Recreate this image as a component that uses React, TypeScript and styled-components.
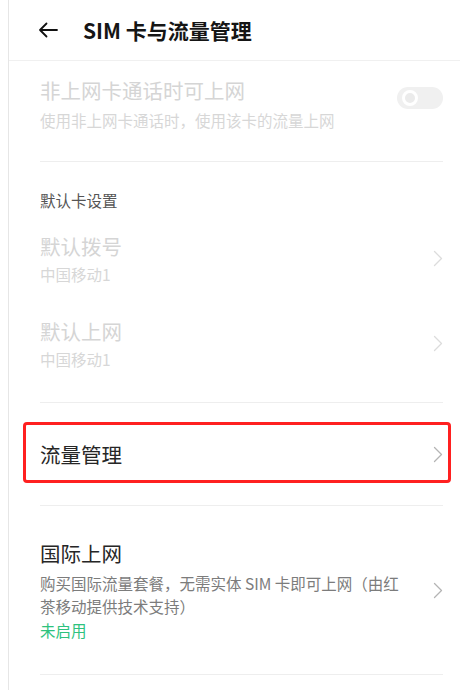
import React from "react";
import styled, { createGlobalStyle } from "styled-components";

const GlobalStyle = createGlobalStyle`
  html, body {
    margin: 0;
    padding: 0;
    background: #fff;
  }
  body {
    font-family: "Noto Sans CJK SC", "Noto Sans", sans-serif;
    -webkit-font-smoothing: antialiased;
  }
`;

const Page = styled.div`
  margin-left: 8px;
  border-left: 1px solid #e6e6e6;
  min-height: 690px;
  background: #fff;
  box-sizing: border-box;
`;

const Header = styled.header`
  display: flex;
  align-items: center;
  gap: 25px;
  height: 61px;
  padding-left: 29px;
  margin-right: 15px;
  border-bottom: 1px solid #f0f0f0;
  box-sizing: border-box;
`;

const BackButton = styled.button`
  display: flex;
  align-items: center;
  justify-content: center;
  width: 20px;
  height: 20px;
  padding: 0;
  border: none;
  background: none;
  color: #111;
`;

const Title = styled.h1`
  margin: 0;
  font-size: 21px;
  font-weight: 700;
  line-height: 28px;
  color: #151515;
`;

const List = styled.div`
  padding: 0 32px 0 31px;
`;

const Divider = styled.div<{ $top?: number; $bottom?: number }>`
  height: 1px;
  background: #eeeeee;
  margin-top: ${(p) => p.$top ?? 0}px;
  margin-bottom: ${(p) => p.$bottom ?? 0}px;
`;

const Row = styled.div<{ $pad: string; $align?: string }>`
  display: flex;
  align-items: ${(p) => p.$align ?? "center"};
  justify-content: space-between;
  gap: 16px;
  padding: ${(p) => p.$pad};
`;

const RowText = styled.div`
  display: flex;
  flex-direction: column;
  min-width: 0;
`;

const RowTitle = styled.div<{ $disabled?: boolean }>`
  font-size: 20.5px;
  line-height: 28px;
  color: ${(p) => (p.$disabled ? "#d5d5d5" : "#262626")};
`;

const RowSub = styled.div<{ $disabled?: boolean; $gap?: number }>`
  margin-top: ${(p) => p.$gap ?? 3}px;
  font-size: 15.5px;
  line-height: 22px;
  color: ${(p) => (p.$disabled ? "#d7d7d7" : "#7a7a7a")};
`;

const Description = styled.div`
  margin-top: 5px;
  max-width: 368px;
  font-size: 15.5px;
  line-height: 23px;
  color: #7c7c7c;
`;

const Status = styled.div`
  margin-top: 1px;
  font-size: 15.5px;
  line-height: 22px;
  color: #2ec27e;
`;

const SectionLabel = styled.div`
  padding-top: 27px;
  margin-bottom: 5px;
  font-size: 15.5px;
  line-height: 22px;
  color: #555;
`;

const Toggle = styled.div`
  flex-shrink: 0;
  display: flex;
  align-items: center;
  width: 46px;
  height: 22px;
  margin-top: 11px;
  padding: 0 5px;
  border-radius: 11px;
  background: #f0f0f0;
  box-sizing: border-box;
`;

const Knob = styled.div`
  width: 16px;
  height: 16px;
  border-radius: 50%;
  border: 3px solid #fff;
  background: #ebebeb;
  box-sizing: border-box;
`;

const Highlight = styled.div`
  margin: 19px -8px 22px -17px;
  padding: 3px 5px 0 14px;
  height: 61px;
  border: 3px solid #ff2020;
  border-radius: 4px;
  box-sizing: border-box;
  display: flex;
  align-items: center;
  justify-content: space-between;
`;

const ChevronWrap = styled.span<{ $disabled?: boolean }>`
  flex-shrink: 0;
  display: flex;
  color: ${(p) => (p.$disabled ? "#dcdcdc" : "#b4b4b4")};
`;

const Chevron = ({ disabled }: { disabled?: boolean }) => (
  <ChevronWrap $disabled={disabled}>
    <svg width="10" height="17" viewBox="0 0 10 17" fill="none">
      <path d="M1.5 1.5 L8.5 8.5 L1.5 15.5" stroke="currentColor" strokeWidth="1.3" strokeLinecap="round" strokeLinejoin="round" />
    </svg>
  </ChevronWrap>
);

const defaultCards = [
  { title: "默认拨号", sub: "中国移动1" },
  { title: "默认上网", sub: "中国移动1" },
];

export default function App() {
  return (
    <>
      <GlobalStyle />
      <Page>
        <Header>
          <BackButton aria-label="返回">
            <svg width="20" height="16" viewBox="0 0 20 16" fill="none">
              <path d="M19 8 H2 M8.5 1.5 L2 8 L8.5 14.5" stroke="currentColor" strokeWidth="1.8" strokeLinecap="round" strokeLinejoin="round" />
            </svg>
          </BackButton>
          <Title>SIM 卡与流量管理</Title>
        </Header>

        <List>
          <Row $pad="15px 0 30px" $align="flex-start">
            <RowText>
              <RowTitle $disabled>非上网卡通话时可上网</RowTitle>
              <RowSub $disabled $gap={5}>使用非上网卡通话时，使用该卡的流量上网</RowSub>
            </RowText>
            <Toggle>
              <Knob />
            </Toggle>
          </Row>
          <Divider />

          <SectionLabel>默认卡设置</SectionLabel>
          {defaultCards.map((item) => (
            <Row key={item.title} $pad="16px 0">
              <RowText>
                <RowTitle $disabled>{item.title}</RowTitle>
                <RowSub $disabled>{item.sub}</RowSub>
              </RowText>
              <Chevron disabled />
            </Row>
          ))}
          <Divider $top={16} />

          <Highlight>
            <RowTitle>流量管理</RowTitle>
            <Chevron />
          </Highlight>
          <Divider />

          <Row $pad="33px 0">
            <RowText>
              <RowTitle>国际上网</RowTitle>
              <Description>购买国际流量套餐，无需实体 SIM 卡即可上网（由红茶移动提供技术支持）</Description>
              <Status>未启用</Status>
            </RowText>
            <Chevron />
          </Row>
          <Divider />
        </List>
      </Page>
    </>
  );
}
